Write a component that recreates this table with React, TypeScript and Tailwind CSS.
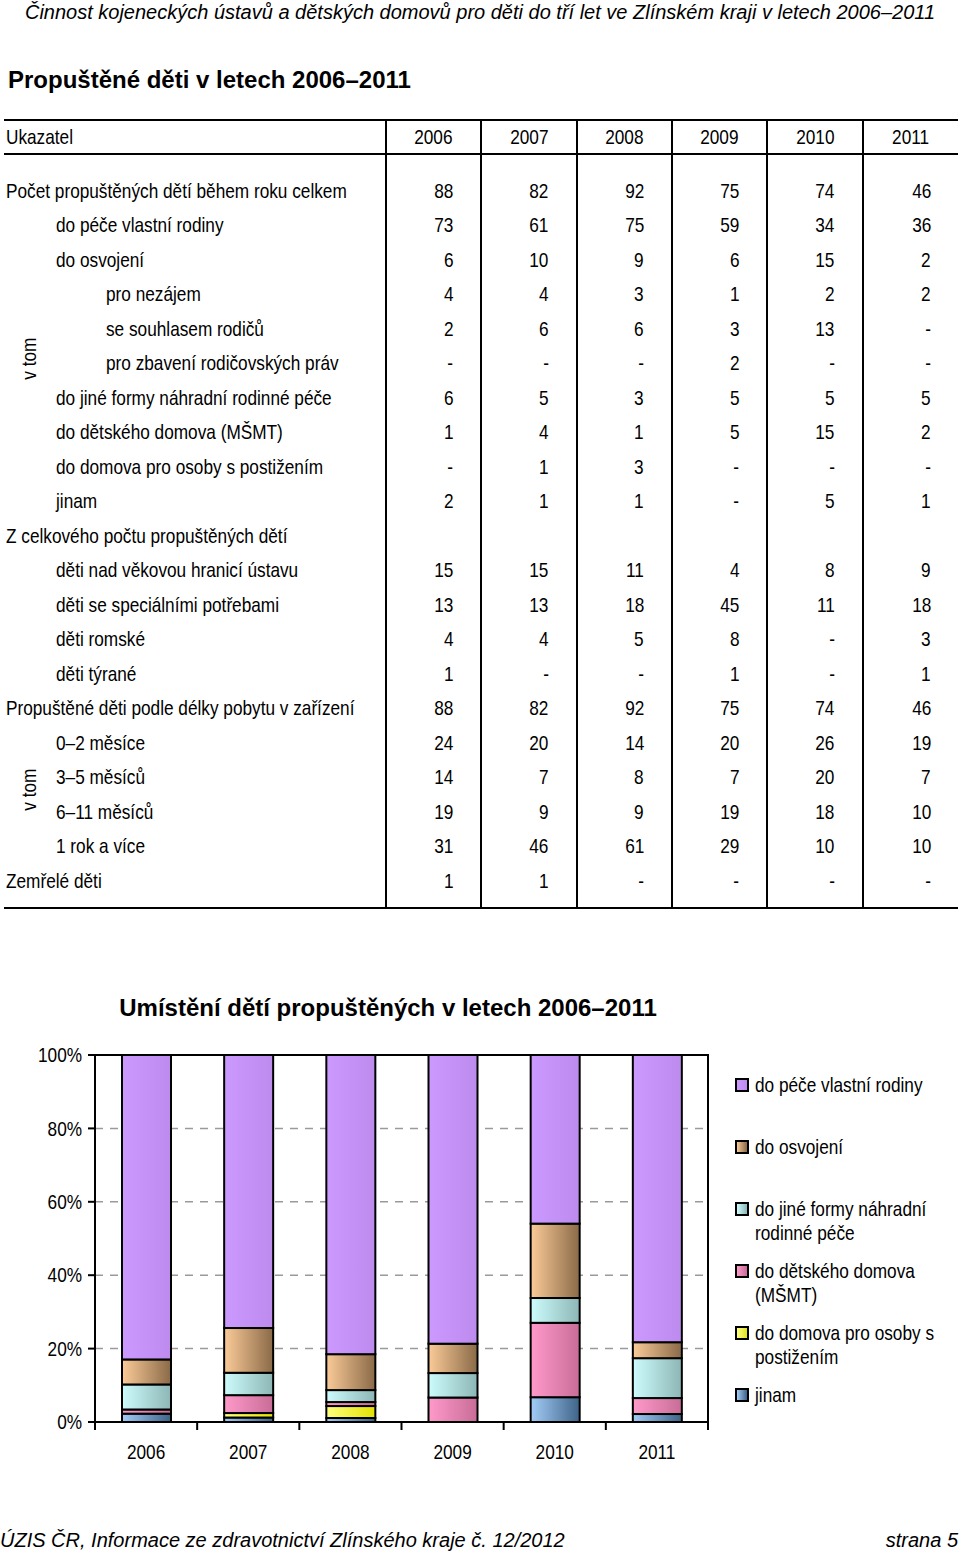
import React from "react";

type Row = {
  label: string;
  lvl: 0 | 1 | 2;
  v?: string[];
  // number = starts a "v tom" cell spanning that many rows, 0 = covered, null = empty cell
  vtom?: number | 0 | null;
};

const d = (s: string) => s.split(" ");

const rows: Row[] = [
  { label: "Počet propuštěných dětí během roku celkem", lvl: 0, v: d("88 82 92 75 74 46") },
  { label: "do péče vlastní rodiny", lvl: 1, v: d("73 61 75 59 34 36"), vtom: 9 },
  { label: "do osvojení", lvl: 1, v: d("6 10 9 6 15 2"), vtom: 0 },
  { label: "pro nezájem", lvl: 2, v: d("4 4 3 1 2 2"), vtom: 0 },
  { label: "se souhlasem rodičů", lvl: 2, v: d("2 6 6 3 13 -"), vtom: 0 },
  { label: "pro zbavení rodičovských práv", lvl: 2, v: d("- - - 2 - -"), vtom: 0 },
  { label: "do jiné formy náhradní rodinné péče", lvl: 1, v: d("6 5 3 5 5 5"), vtom: 0 },
  { label: "do dětského domova (MŠMT)", lvl: 1, v: d("1 4 1 5 15 2"), vtom: 0 },
  { label: "do domova pro osoby s postižením", lvl: 1, v: d("- 1 3 - - -"), vtom: 0 },
  { label: "jinam", lvl: 1, v: d("2 1 1 - 5 1"), vtom: 0 },
  { label: "Z celkového počtu propuštěných dětí", lvl: 0 },
  { label: "děti nad věkovou hranicí ústavu", lvl: 1, v: d("15 15 11 4 8 9"), vtom: null },
  { label: "děti se speciálními potřebami", lvl: 1, v: d("13 13 18 45 11 18"), vtom: null },
  { label: "děti romské", lvl: 1, v: d("4 4 5 8 - 3"), vtom: null },
  { label: "děti týrané", lvl: 1, v: d("1 - - 1 - 1"), vtom: null },
  { label: "Propuštěné děti podle délky pobytu v zařízení", lvl: 0, v: d("88 82 92 75 74 46") },
  { label: "0–2 měsíce", lvl: 1, v: d("24 20 14 20 26 19"), vtom: 4 },
  { label: "3–5 měsíců", lvl: 1, v: d("14 7 8 7 20 7"), vtom: 0 },
  { label: "6–11 měsíců", lvl: 1, v: d("19 9 9 19 18 10"), vtom: 0 },
  { label: "1 rok a více", lvl: 1, v: d("31 46 61 29 10 10"), vtom: 0 },
  { label: "Zemřelé děti", lvl: 0, v: d("1 1 - - - -") },
];

const years = ["2006", "2007", "2008", "2009", "2010", "2011"];

// stacked from the bottom up
const series = [
  { key: "jinam", vals: [2, 1, 1, 0, 5, 1], from: "#a3cdf7", to: "#3f6388" },
  { key: "post", vals: [0, 1, 3, 0, 0, 0], from: "#ffff80", to: "#e2e200" },
  { key: "dd", vals: [1, 4, 1, 5, 15, 2], from: "#ff9acb", to: "#c86c97" },
  { key: "jine", vals: [6, 5, 3, 5, 5, 5], from: "#cdfcfc", to: "#8db6b6" },
  { key: "osv", vals: [6, 10, 9, 6, 15, 2], from: "#fbcb98", to: "#8a6a48" },
  { key: "rod", vals: [73, 61, 75, 59, 34, 36], from: "#cc99ff", to: "#bd8aee" },
];

const legend = [
  { key: "rod", lines: ["do péče vlastní rodiny"] },
  { key: "osv", lines: ["do osvojení"] },
  { key: "jine", lines: ["do jiné formy náhradní", "rodinné péče"] },
  { key: "dd", lines: ["do dětského domova", "(MŠMT)"] },
  { key: "post", lines: ["do domova pro osoby s", "postižením"] },
  { key: "jinam", lines: ["jinam"] },
];

const swatch: Record<string, string> = {
  rod: "bg-gradient-to-r from-[#cc99ff] to-[#bd8aee]",
  osv: "bg-gradient-to-r from-[#fbcb98] to-[#8a6a48]",
  jine: "bg-gradient-to-r from-[#cdfcfc] to-[#8db6b6]",
  dd: "bg-gradient-to-r from-[#ff9acb] to-[#c86c97]",
  post: "bg-gradient-to-r from-[#ffff80] to-[#e2e200]",
  jinam: "bg-gradient-to-r from-[#a3cdf7] to-[#3f6388]",
};

// Arial Narrow is not installed, so squeeze Liberation Sans horizontally
function Narrow({ children, origin = "left" }: { children: React.ReactNode; origin?: "left" | "right" | "center" }) {
  const o = origin === "left" ? "origin-left" : origin === "right" ? "origin-right" : "origin-center";
  return <span className={`inline-block whitespace-nowrap scale-x-[0.82] ${o}`}>{children}</span>;
}

function SvgText({ x, y, anchor, children }: { x: number; y: number; anchor: "end" | "middle"; children: React.ReactNode }) {
  return (
    <text
      transform={`translate(${x} ${y}) scale(0.82 1)`}
      textAnchor={anchor}
      dominantBaseline="central"
      fontSize="21"
      fill="#000"
    >
      {children}
    </text>
  );
}

function Chart() {
  const left = 95;
  const right = 708;
  const top = 15;
  const bottom = 382;
  const h = bottom - top;
  const cat = (right - left) / 6;
  const barW = 49;

  return (
    <svg width="720" height="430" className="block shrink-0">
      <defs>
        {series.map((s) => (
          <linearGradient key={s.key} id={`g-${s.key}`} x1="0" y1="0" x2="1" y2="0">
            <stop offset="0" stopColor={s.from} />
            <stop offset="1" stopColor={s.to} />
          </linearGradient>
        ))}
      </defs>

      {/* grid lines */}
      {[0.8, 0.6, 0.4, 0.2].map((p) => (
        <line
          key={p}
          x1={left}
          x2={right}
          y1={bottom - p * h}
          y2={bottom - p * h}
          stroke="#9a9a9a"
          strokeWidth="1.5"
          strokeDasharray="8 7"
        />
      ))}

      {/* bars */}
      {years.map((y, i) => {
        const total = series.reduce((a, s) => a + s.vals[i], 0);
        const x = left + i * cat + 27;
        let acc = 0;
        return (
          <g key={y}>
            {series.map((s) => {
              const v = s.vals[i];
              if (!v) return null;
              const y1 = bottom - ((acc + v) / total) * h;
              const y0 = bottom - (acc / total) * h;
              acc += v;
              return (
                <rect
                  key={s.key}
                  x={x}
                  y={y1}
                  width={barW}
                  height={y0 - y1}
                  fill={`url(#g-${s.key})`}
                  stroke="#000"
                  strokeWidth="2"
                />
              );
            })}
          </g>
        );
      })}

      {/* frame */}
      <rect x={left} y={top} width={right - left} height={h} fill="none" stroke="#000" strokeWidth="2" />

      {/* y ticks + labels */}
      {[0, 20, 40, 60, 80, 100].map((p) => (
        <g key={p}>
          <line x1={left - 7} x2={left} y1={bottom - (p / 100) * h} y2={bottom - (p / 100) * h} stroke="#000" strokeWidth="2" />
          <SvgText x={82} y={bottom - (p / 100) * h} anchor="end">
            {p}%
          </SvgText>
        </g>
      ))}

      {/* x ticks + labels */}
      {[0, 1, 2, 3, 4, 5, 6].map((i) => (
        <line key={i} x1={left + i * cat} x2={left + i * cat} y1={bottom} y2={bottom + 8} stroke="#000" strokeWidth="2" />
      ))}
      {years.map((y, i) => (
        <SvgText key={y} x={left + i * cat + cat / 2} y={412} anchor="middle">
          {y}
        </SvgText>
      ))}
    </svg>
  );
}

export default function App() {
  return (
    <div className="w-[960px] h-[1554px] overflow-hidden bg-white text-black font-['Liberation_Sans',Arial,sans-serif] flex flex-col">
      {/* running header */}
      <div className="h-[24px] flex items-center justify-center text-[20px] italic">
        Činnost kojeneckých ústavů a dětských domovů pro děti do tří let ve Zlínském kraji v letech 2006–2011
      </div>

      <h1 className="mt-[44px] h-[24px] flex items-center pl-[8px] text-[24px] font-bold">
        Propuštěné děti v letech 2006–2011
      </h1>

      <table className="mt-[27px] ml-[4px] w-[954px] table-fixed border-collapse text-[21px]">
        <colgroup>
          <col className="w-[50px]" />
          <col className="w-[332px]" />
          {years.map((y) => (
            <col key={y} className="w-[95.33px]" />
          ))}
        </colgroup>
        <thead>
          <tr className="h-[34px] border-y-2 border-black">
            <th colSpan={2} className="text-left font-normal pl-[2px]">
              <Narrow>Ukazatel</Narrow>
            </th>
            {years.map((y) => (
              <th key={y} className="font-normal text-center border-l-2 border-black">
                <Narrow origin="center">{y}</Narrow>
              </th>
            ))}
          </tr>
        </thead>
        <tbody>
          <tr className="h-[19px]">
            <td colSpan={2} />
            {years.map((y) => (
              <td key={y} className="border-l-2 border-black" />
            ))}
          </tr>
          {rows.map((r) => (
            <tr key={r.label} className="h-[34.5px]">
              {r.lvl === 0 ? (
                <td colSpan={2} className="pl-[2px] whitespace-nowrap">
                  <Narrow>{r.label}</Narrow>
                </td>
              ) : (
                <>
                  {r.vtom === null && <td />}
                  {typeof r.vtom === "number" && r.vtom > 0 && (
                    <td rowSpan={r.vtom} className="text-center align-middle">
                      <span className="inline-block [writing-mode:vertical-rl] rotate-180 scale-y-[0.82]">v tom</span>
                    </td>
                  )}
                  <td className={`whitespace-nowrap ${r.lvl === 2 ? "pl-[52px]" : "pl-[2px]"}`}>
                    <Narrow>{r.label}</Narrow>
                  </td>
                </>
              )}
              {years.map((y, i) => (
                <td key={y} className="text-right pr-[27px] border-l-2 border-black">
                  {r.v ? <Narrow origin="right">{r.v[i]}</Narrow> : ""}
                </td>
              ))}
            </tr>
          ))}
          <tr className="h-[10px] border-b-2 border-black">
            <td colSpan={2} />
            {years.map((y) => (
              <td key={y} className="border-l-2 border-black" />
            ))}
          </tr>
        </tbody>
      </table>

      {/* chart */}
      <div className="mt-[84px] w-[776px] h-[30px] flex items-center justify-center text-[24px] font-bold">
        Umístění dětí propuštěných v letech 2006–2011
      </div>
      <div className="mt-[17px] flex">
        <Chart />
        <div className="w-[240px] shrink-0 pl-[15px] pt-[33px] flex flex-col text-[21px] leading-[24px]">
          {legend.map((l) => (
            <div key={l.key} className="h-[62px] flex gap-[6px]">
              <div className={`mt-[5px] w-[14px] h-[14px] shrink-0 border-2 border-black ${swatch[l.key]}`} />
              <div>
                {l.lines.map((t) => (
                  <div key={t}>
                    <Narrow>{t}</Narrow>
                  </div>
                ))}
              </div>
            </div>
          ))}
        </div>
      </div>

      {/* footer */}
      <div className="mt-auto mb-[2px] h-[24px] flex items-center justify-between text-[20px] italic pr-[2px]">
        <span>ÚZIS ČR, Informace ze zdravotnictví Zlínského kraje č. 12/2012</span>
        <span>strana 5</span>
      </div>
    </div>
  );
}
